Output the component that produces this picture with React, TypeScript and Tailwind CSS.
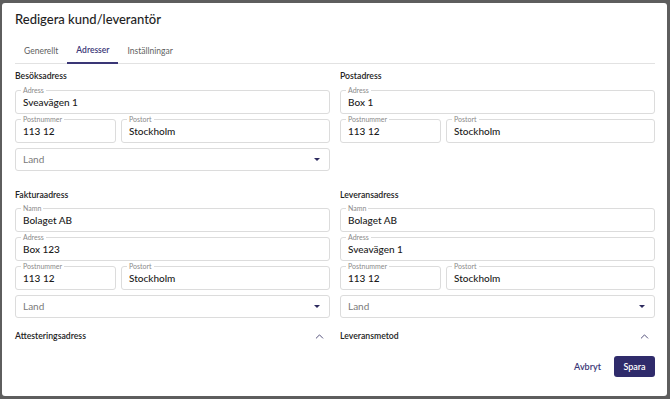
import { ChevronUp } from "lucide-react";

const tabs = ["Generellt", "Adresser", "Inställningar"];

function Field({ label, value }: { label: string; value: string }) {
  return (
    <div className="relative h-[24px] rounded-[3px] border border-[#dcdcdc] pl-[7px] flex items-center">
      <span className="absolute -top-[6px] left-[5px] bg-white px-[2px] text-[7px] leading-[10px] text-[#8a8a8a]">
        {label}
      </span>
      <span className="text-[10px] font-medium text-[#1a1a1a]">{value}</span>
    </div>
  );
}

function LandSelect() {
  return (
    <div className="h-[23px] rounded-[3px] border border-[#dcdcdc] pl-[7px] pr-[9px] flex items-center justify-between">
      <span className="text-[10px] text-[#7a7a7a]">Land</span>
      <svg width="6" height="3" viewBox="0 0 6 3">
        <path d="M0 0h6L3 3z" fill="#2d2a5e" />
      </svg>
    </div>
  );
}

function SectionTitle({ children }: { children: string }) {
  return (
    <div className="h-[14px] leading-[14px] text-[8.7px] font-semibold text-[#222]">{children}</div>
  );
}

function PostRow({ nr, ort }: { nr: string; ort: string }) {
  return (
    <div className="flex gap-[5px]">
      <div className="w-[101px]">
        <Field label="Postnummer" value={nr} />
      </div>
      <div className="flex-1">
        <Field label="Postort" value={ort} />
      </div>
    </div>
  );
}

function Collapsed({ title }: { title: string }) {
  return (
    <div className="h-[20px] flex items-center justify-between pr-[4px]">
      <SectionTitle>{title}</SectionTitle>
      <ChevronUp size={13} strokeWidth={1.5} className="text-[#2d2a5e]" />
    </div>
  );
}

export default function App() {
  return (
    <div
      className="w-[670px] h-[399px] bg-[#5e5e5e] pt-[3px] pl-[2px]"
      style={{ fontFamily: "Lato, 'Noto Sans', sans-serif" }}
    >
      <div className="w-[665px] h-[393px] bg-white rounded-[3px] pl-[13px] pr-[12px] flex flex-col">
        <h1 className="mt-[8px] h-[16px] leading-[16px] text-[13px] font-medium text-[#1e1e1e]">
          Redigera kund/leverantör
        </h1>

        {/* Tabs */}
        <div className="mt-[11px] h-[26px] border-b border-[#e2e2e2] flex">
          {tabs.map((t) => (
            <div
              key={t}
              className={`px-[9px] flex items-center text-[8.5px] -mb-px ${
                t === "Adresser"
                  ? "border-b-2 border-[#3a3676] text-[#3a3676] font-semibold"
                  : "text-[#5f5f5f]"
              }`}
            >
              {t}
            </div>
          ))}
        </div>

        <div className="grid grid-cols-2 gap-x-[10px] mt-[5px]">
          {/* Besöksadress */}
          <div className="flex flex-col">
            <SectionTitle>Besöksadress</SectionTitle>
            <div className="mt-[7px] flex flex-col gap-[5px]">
              <Field label="Adress" value="Sveavägen 1" />
              <PostRow nr="113 12" ort="Stockholm" />
              <LandSelect />
            </div>
          </div>
          {/* Postadress */}
          <div className="flex flex-col">
            <SectionTitle>Postadress</SectionTitle>
            <div className="mt-[7px] flex flex-col gap-[5px]">
              <Field label="Adress" value="Box 1" />
              <PostRow nr="113 12" ort="Stockholm" />
            </div>
          </div>

          {/* Fakturaadress */}
          <div className="flex flex-col mt-[17px]">
            <SectionTitle>Fakturaadress</SectionTitle>
            <div className="mt-[6px] flex flex-col gap-[5px]">
              <Field label="Namn" value="Bolaget AB" />
              <Field label="Adress" value="Box 123" />
              <PostRow nr="113 12" ort="Stockholm" />
              <LandSelect />
            </div>
            <div className="mt-[8px]">
              <Collapsed title="Attesteringsadress" />
            </div>
          </div>
          {/* Leveransadress */}
          <div className="flex flex-col mt-[17px]">
            <SectionTitle>Leveransadress</SectionTitle>
            <div className="mt-[6px] flex flex-col gap-[5px]">
              <Field label="Namn" value="Bolaget AB" />
              <Field label="Adress" value="Sveavägen 1" />
              <PostRow nr="113 12" ort="Stockholm" />
              <LandSelect />
            </div>
            <div className="mt-[8px]">
              <Collapsed title="Leveransmetod" />
            </div>
          </div>
        </div>

        {/* Footer */}
        <div className="mt-[10px] flex justify-end items-center gap-[9px]">
          <button className="px-[4px] text-[9px] font-semibold text-[#3a3676]">Avbryt</button>
          <button className="h-[21px] w-[41px] rounded-[3px] bg-[#2f2b6b] text-white text-[9px] font-semibold">
            Spara
          </button>
        </div>
      </div>
    </div>
  );
}
